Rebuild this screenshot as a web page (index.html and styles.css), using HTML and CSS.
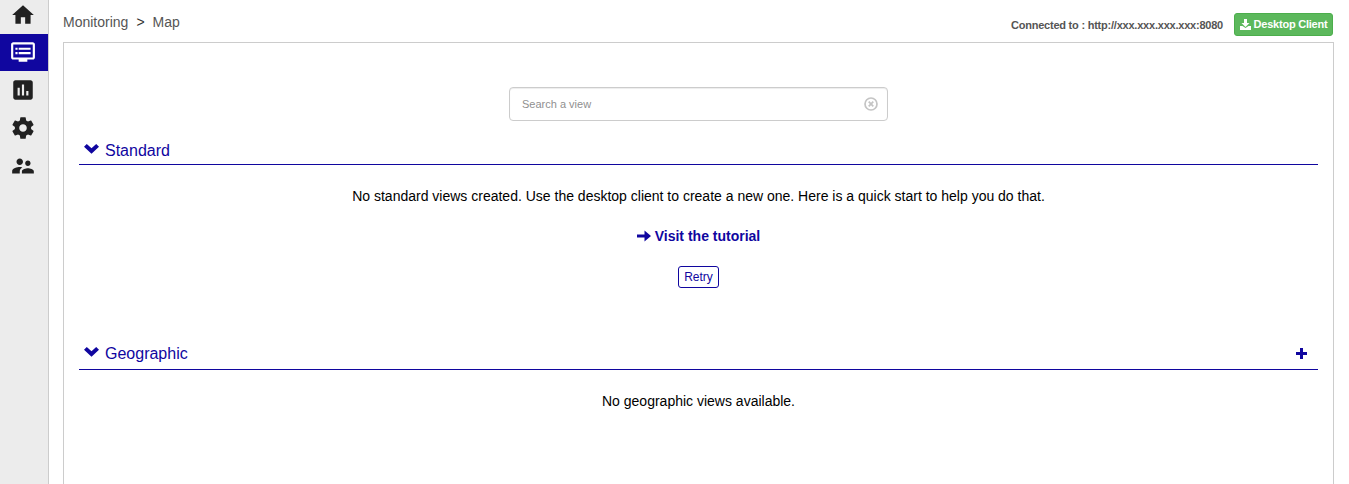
FILE: index.html
```html
<!DOCTYPE html>
<html lang="en">
<head>
<meta charset="utf-8">
<title>Monitoring - Map</title>
<link rel="stylesheet" href="styles.css">
</head>
<body>
<nav class="sidebar">
  <a class="nav-item"><svg class="nav-icon" viewBox="0 0 24 24"><path d="M10 20v-6h4v6h5v-8h3L12 3 2 12h3v8z"/></svg></a>
  <a class="nav-item active"><svg class="nav-icon" viewBox="0 0 24 24"><path d="M21 3H3c-1.100 0-2 .9-2 2v12c0 1.100.9 2 2 2h5v2h8v-2h5c1.100 0 2-.9 2-2V5c0-1.100-.9-2-2-2zm0 14H3V5h18v12zm-2-9H8v2h11V8zm0 4H8v2h11v-2zM7 8H5v2h2V8zm0 4H5v2h2v-2z"/></svg></a>
  <a class="nav-item"><svg class="nav-icon" viewBox="0 0 24 24"><path d="M19 3H5c-1.100 0-2 .9-2 2v14c0 1.100.9 2 2 2h14c1.100 0 2-.9 2-2V5c0-1.100-.9-2-2-2zM9 17H7v-7h2v7zm4 0h-2V7h2v10zm4 0h-2v-4h2v4z"/></svg></a>
  <a class="nav-item"><svg class="nav-icon" viewBox="0 0 24 24"><path d="M19.430 12.980c.04-.32.07-.64.07-.98s-.03-.66-.07-.98l2.110-1.650c.19-.15.24-.42.12-.64l-2-3.460c-.12-.22-.39-.3-.61-.22l-2.490 1c-.52-.4-1.080-.73-1.690-.98l-.38-2.650C14.460 2.180 14.250 2 14 2h-4c-.25 0-.46.18-.49.42l-.38 2.650c-.61.25-1.170.59-1.690.98l-2.490-1c-.23-.09-.49 0-.61.22l-2 3.460c-.13.22-.07.49.12.64l2.110 1.650c-.04.32-.07.65-.07.98s.03.66.07.98l-2.110 1.650c-.19.15-.24.42-.12.64l2 3.460c.12.22.39.3.61.22l2.490-1c.52.4 1.080.73 1.690.98l.38 2.650c.03.24.24.42.49.42h4c.25 0 .46-.18.49-.42l.38-2.650c.61-.25 1.170-.59 1.690-.98l2.490 1c.23.09.49 0 .61-.22l2-3.460c.12-.22.07-.49-.12-.64l-2.110-1.650zM12 15.500c-1.930 0-3.500-1.570-3.500-3.500s1.570-3.500 3.500-3.500 3.500 1.570 3.500 3.500-1.570 3.500-3.500 3.500z"/></svg></a>
  <a class="nav-item"><svg class="nav-icon" viewBox="0 0 24 24"><path d="M16.500 12c1.380 0 2.490-1.120 2.490-2.500S17.880 7 16.500 7 14 8.120 14 9.500s1.120 2.500 2.500 2.500zM9 11c1.660 0 2.990-1.340 2.990-3S10.660 5 9 5 6 6.340 6 8s1.340 3 3 3zm7.500 3c-1.830 0-5.500.92-5.500 2.750V19h11v-2.250c0-1.830-3.670-2.750-5.500-2.750zM9 13c-2.330 0-7 1.170-7 3.500V19h7v-2.250c0-.85.33-2.340 2.370-3.470C10.500 13.100 9.660 13 9 13z"/></svg></a>
</nav>
<main class="page">
  <header class="topbar">
    <div class="breadcrumb"><span>Monitoring</span><span class="sep">&gt;</span><span>Map</span></div>
    <div class="connection">
      <span class="server">Connected to : http://xxx.xxx.xxx.xxx:8080</span>
      <button class="download"><svg class="download-icon" viewBox="0 0 11 11"><path d="M4 0h3v4h2.500L5.500 8 1.500 4H4zM0 7h2.500l3 2 3-2H11v4H0z"/></svg>Desktop Client</button>
    </div>
  </header>
  <div class="panel">
    <div class="search">
      <input class="search-input" type="text" placeholder="Search a view">
      <svg class="clear-icon" viewBox="0 0 14 14"><circle cx="7" cy="7" r="6"/><path d="M4.700 4.700l4.600 4.600M9.300 4.700l-4.600 4.600"/></svg>
    </div>
    <section class="standard">
      <div class="section-head"><svg class="chevron" viewBox="0 0 15 10"><path d="M0 2.800L2.800 0l4.700 4.200L12.200 0 15 2.800l-7.500 7z"/></svg><h2 class="title">Standard</h2></div>
      <p class="message">No standard views created. Use the desktop client to create a new one. Here is a quick start to help you do that.</p>
      <a class="tutorial"><svg class="arrow" viewBox="0 0 14 12"><path d="M0 4.500h7.500V.5L14 6l-6.500 5.500v-4H0z"/></svg>Visit the tutorial</a>
      <button class="retry">Retry</button>
    </section>
    <section class="geographic">
      <div class="section-head"><svg class="chevron" viewBox="0 0 15 10"><path d="M0 2.800L2.800 0l4.700 4.200L12.200 0 15 2.800l-7.500 7z"/></svg><h2 class="title">Geographic</h2><svg class="plus" viewBox="0 0 11 11"><path d="M4 0h3v4h4v3H7v4H4V7H0V4h4z"/></svg></div>
      <p class="message">No geographic views available.</p>
    </section>
  </div>
</main>
</body>
</html>
```
FILE: styles.css
```css
* { box-sizing: border-box; }
body {
  margin: 0;
  height: 484px;
  overflow: hidden;
  display: flex;
  background: #fff;
  font: 14px/20px "Liberation Sans", Arial, sans-serif;
  color: #000;
}
.sidebar {
  width: 49px;
  height: 484px;
  flex: none;
  display: flex;
  flex-direction: column;
  gap: 1px;
  overflow: hidden;
  background: #ececec;
  border-right: 1px solid #ccc;
}
.nav-item {
  height: 37px;
  flex: none;
  display: flex;
  align-items: center;
  padding: 0 0 1px 10px;
  color: #212121;
}
.nav-item:first-child { height: 33px; padding-bottom: 4px; }
.nav-item.active { background: #10069f; color: #fff; }
.nav-icon { width: 26px; height: 26px; fill: currentColor; }
.page { flex: 1; padding: 0 15px 0 14px; }
.topbar {
  height: 42px;
  display: flex;
  justify-content: space-between;
  align-items: flex-start;
  color: #555;
}
.breadcrumb { display: flex; gap: 8px; padding-top: 12px; }
.sep { color: #333; }
.connection { display: flex; gap: 11px; padding: 13px 1px 0 0; font-size: 11px; font-weight: bold; }
.server { line-height: 24px; letter-spacing: -.22px; }
.download {
  width: 99px;
  height: 23px;
  padding: 0;
  display: flex;
  align-items: center;
  justify-content: center;
  gap: 3px;
  border: 1px solid #4cae4c;
  border-radius: 3px;
  background: #5cb85c;
  color: #fff;
  font: bold 11px/15px "Liberation Sans", Arial, sans-serif;
  letter-spacing: -.23px;
  white-space: nowrap;
}
.download-icon { width: 11px; height: 11px; margin-bottom: 1px; fill: #fff; }
.panel { height: 460px; border: 1px solid #ccc; padding: 44px 15px 0; }
.search {
  width: 379px;
  height: 34px;
  margin: 0 auto;
  padding: 0 9px 0 12px;
  display: flex;
  align-items: center;
  border: 1px solid #ccc;
  border-radius: 4px;
  box-shadow: inset 0 1px 1px rgba(0, 0, 0, .075);
}
.search-input {
  flex: 1;
  padding: 0;
  border: 0;
  outline: 0;
  background: none;
  font: 11px/16px "Liberation Sans", Arial, sans-serif;
}
.search-input::placeholder { color: #909090; opacity: 1; }
.clear-icon { width: 14px; height: 14px; fill: none; stroke: #c4c4c4; stroke-width: 1.7; }
.standard, .geographic { display: flex; flex-direction: column; align-items: center; }
.standard { margin-top: 19px; height: 201px; }
.section-head {
  align-self: stretch;
  height: 25px;
  flex: none;
  display: flex;
  align-items: flex-start;
  padding: 0 11px 0 5px;
  border-bottom: 1px solid #10069f;
  color: #10069f;
}
.title { margin: 0 0 0 6px; font-size: 16px; font-weight: normal; line-height: 20px; }
.standard .title { margin-top: 1px; }
.chevron { width: 15px; height: 10px; margin-top: 4px; fill: currentColor; }
.geographic .chevron { margin-top: 3px; }
.plus { width: 11px; height: 11px; margin: 4px 0 0 auto; fill: currentColor; }
.message { margin: 21px 0 0; }
.tutorial {
  display: flex;
  align-items: center;
  gap: 4px;
  margin-top: 20px;
  color: #10069f;
  font-weight: bold;
}
.arrow { width: 14px; height: 12px; fill: currentColor; }
.retry {
  width: 41px;
  height: 22px;
  margin-top: 20px;
  padding: 0;
  border: 1px solid #10069f;
  border-radius: 3px;
  background: #fff;
  color: #10069f;
  font: 12px/18px "Liberation Sans", Arial, sans-serif;
}
.geographic { padding-top: 3px; }
.geographic .section-head { height: 26px; }
```
